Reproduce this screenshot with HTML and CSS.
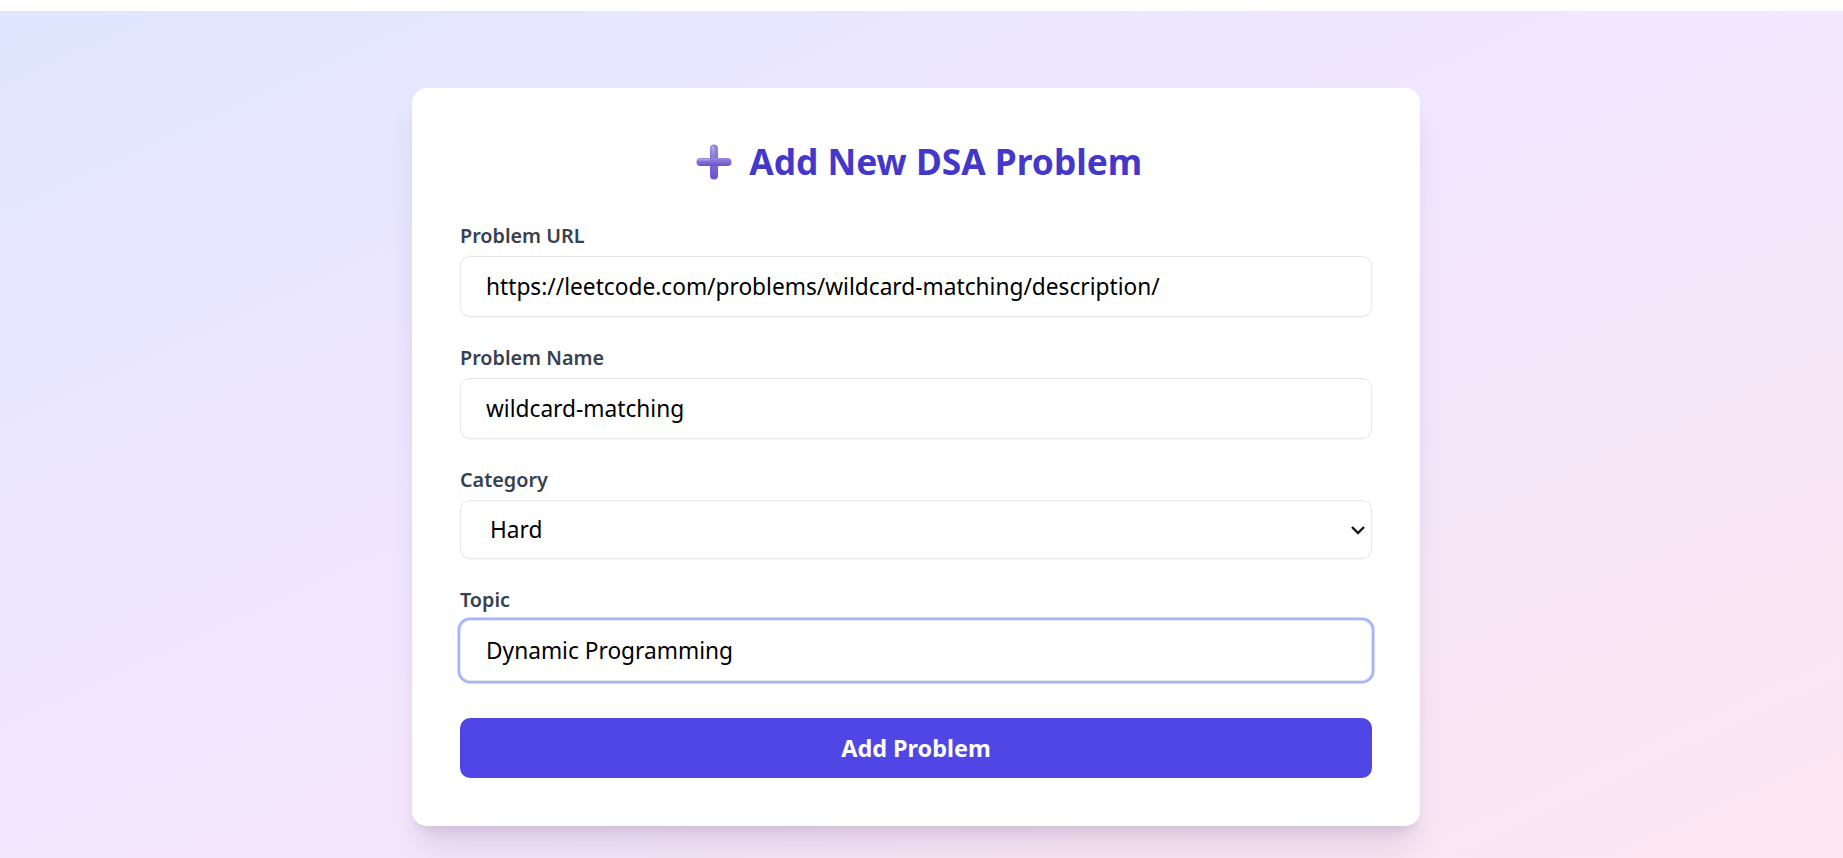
FILE: index.html
```html
<!DOCTYPE html>
<html lang="en">
<head>
<meta charset="utf-8">
<title>Add New DSA Problem</title>
<link rel="stylesheet" href="styles.css">
</head>
<body>
<main class="page">
  <section class="card">
    <h2 class="title">
      <svg class="title-icon" viewBox="0 0 36 36" aria-hidden="true">
        <defs>
          <linearGradient id="plusg" x1="0" y1="0" x2="0" y2="1">
            <stop offset="0" stop-color="#938ade"/>
            <stop offset="0.5" stop-color="#7e70d3"/>
            <stop offset="1" stop-color="#6c4ed2"/>
          </linearGradient>
          <linearGradient id="plush" x1="0" y1="0" x2="0" y2="1">
            <stop offset="0" stop-color="#ffffff" stop-opacity="0.35"/>
            <stop offset="1" stop-color="#ffffff" stop-opacity="0"/>
          </linearGradient>
        </defs>
        <rect x="14" y="0.5" width="8" height="35" rx="4" fill="url(#plusg)"/>
        <rect x="0.5" y="14" width="35" height="8" rx="4" fill="url(#plusg)"/>
        <rect x="15.5" y="2" width="3" height="12" rx="1.5" fill="url(#plush)"/>
        <rect x="2" y="15" width="12" height="2.5" rx="1.25" fill="url(#plush)"/>
      </svg>
      <span>Add New DSA Problem</span>
    </h2>
    <form class="form">
      <div class="field">
        <label class="label" for="url">Problem URL</label>
        <input class="control" id="url" type="text" value="https://leetcode.com/problems/wildcard-matching/description/">
      </div>
      <div class="field">
        <label class="label" for="name">Problem Name</label>
        <input class="control" id="name" type="text" value="wildcard-matching">
      </div>
      <div class="field">
        <label class="label" for="category">Category</label>
        <select class="control select" id="category">
          <option>Easy</option>
          <option>Medium</option>
          <option selected>Hard</option>
        </select>
      </div>
      <div class="field">
        <label class="label" for="topic">Topic</label>
        <input class="control focused" id="topic" type="text" value="Dynamic Programming">
      </div>
      <button class="submit" type="button">Add Problem</button>
    </form>
  </section>
</main>
</body>
</html>
```
FILE: styles.css
```css
html, body {
  margin: 0;
  padding: 0;
  background: #ffffff;
}

body {
  font-family: "Noto Sans", "Open Sans", sans-serif;
}

.page {
  margin-top: 11px;
  min-height: 847px;
  box-sizing: border-box;
  padding: 77px 11px 0 0;
  display: flex;
  justify-content: center;
  align-items: flex-start;
  background: linear-gradient(to bottom right, #e0e6ff 0%, #f3e7fe 50%, #fce6f1 100%);
}

.card {
  width: 1008px;
  box-sizing: border-box;
  background: #ffffff;
  border-radius: 15px;
  padding: 51px 48px 48px;
  box-shadow: 0 25px 31px -6px rgba(60, 30, 90, 0.12), 0 10px 12px -7px rgba(60, 30, 90, 0.12);
}

.title {
  margin: 0 0 37px;
  padding-left: 6px;
  display: flex;
  justify-content: center;
  align-items: center;
  gap: 17.5px;
  font-size: 35.3px;
  line-height: 45px;
  font-weight: 700;
  color: #4338ca;
}

.title-icon {
  width: 36px;
  height: 36px;
  flex: none;
}

.form {
  display: flex;
  flex-direction: column;
  gap: 26px;
}

.field {
  display: flex;
  flex-direction: column;
}

.label {
  font-size: 19.8px;
  line-height: 30px;
  font-weight: 600;
  color: #374151;
  margin-bottom: 5px;
}

.control {
  height: 61px;
  box-sizing: border-box;
  width: 100%;
  margin: 0;
  padding: 0 25px;
  border: 1px solid #e5e7eb;
  border-radius: 10px;
  background: #ffffff;
  font-family: "Noto Sans", "Open Sans", sans-serif;
  font-size: 22.7px;
  color: #000000;
  box-shadow: 0 1px 2px rgba(0, 0, 0, 0.04);
  outline: none;
}

.select {
  height: 59px;
  appearance: none;
  -webkit-appearance: none;
  padding-left: 29px;
  background-image: url("data:image/svg+xml,%3Csvg xmlns='http://www.w3.org/2000/svg' viewBox='0 0 16 10' width='16' height='10'%3E%3Cpath d='M2 2 L8 8 L14 2' fill='none' stroke='%23111' stroke-width='2.4'/%3E%3C/svg%3E");
  background-repeat: no-repeat;
  background-position: right 5px center;
  background-size: 16px 10px;
}

.focused {
  border-color: #e5e7eb;
  box-shadow: 0 0 0 2.5px #a5b4fc;
}

.submit {
  margin-top: 11px;
  height: 60px;
  width: 100%;
  border: none;
  border-radius: 10px;
  background: #4f46e5;
  color: #ffffff;
  font-family: "Noto Sans", "Open Sans", sans-serif;
  font-size: 23.4px;
  font-weight: 700;
  cursor: pointer;
}
```
